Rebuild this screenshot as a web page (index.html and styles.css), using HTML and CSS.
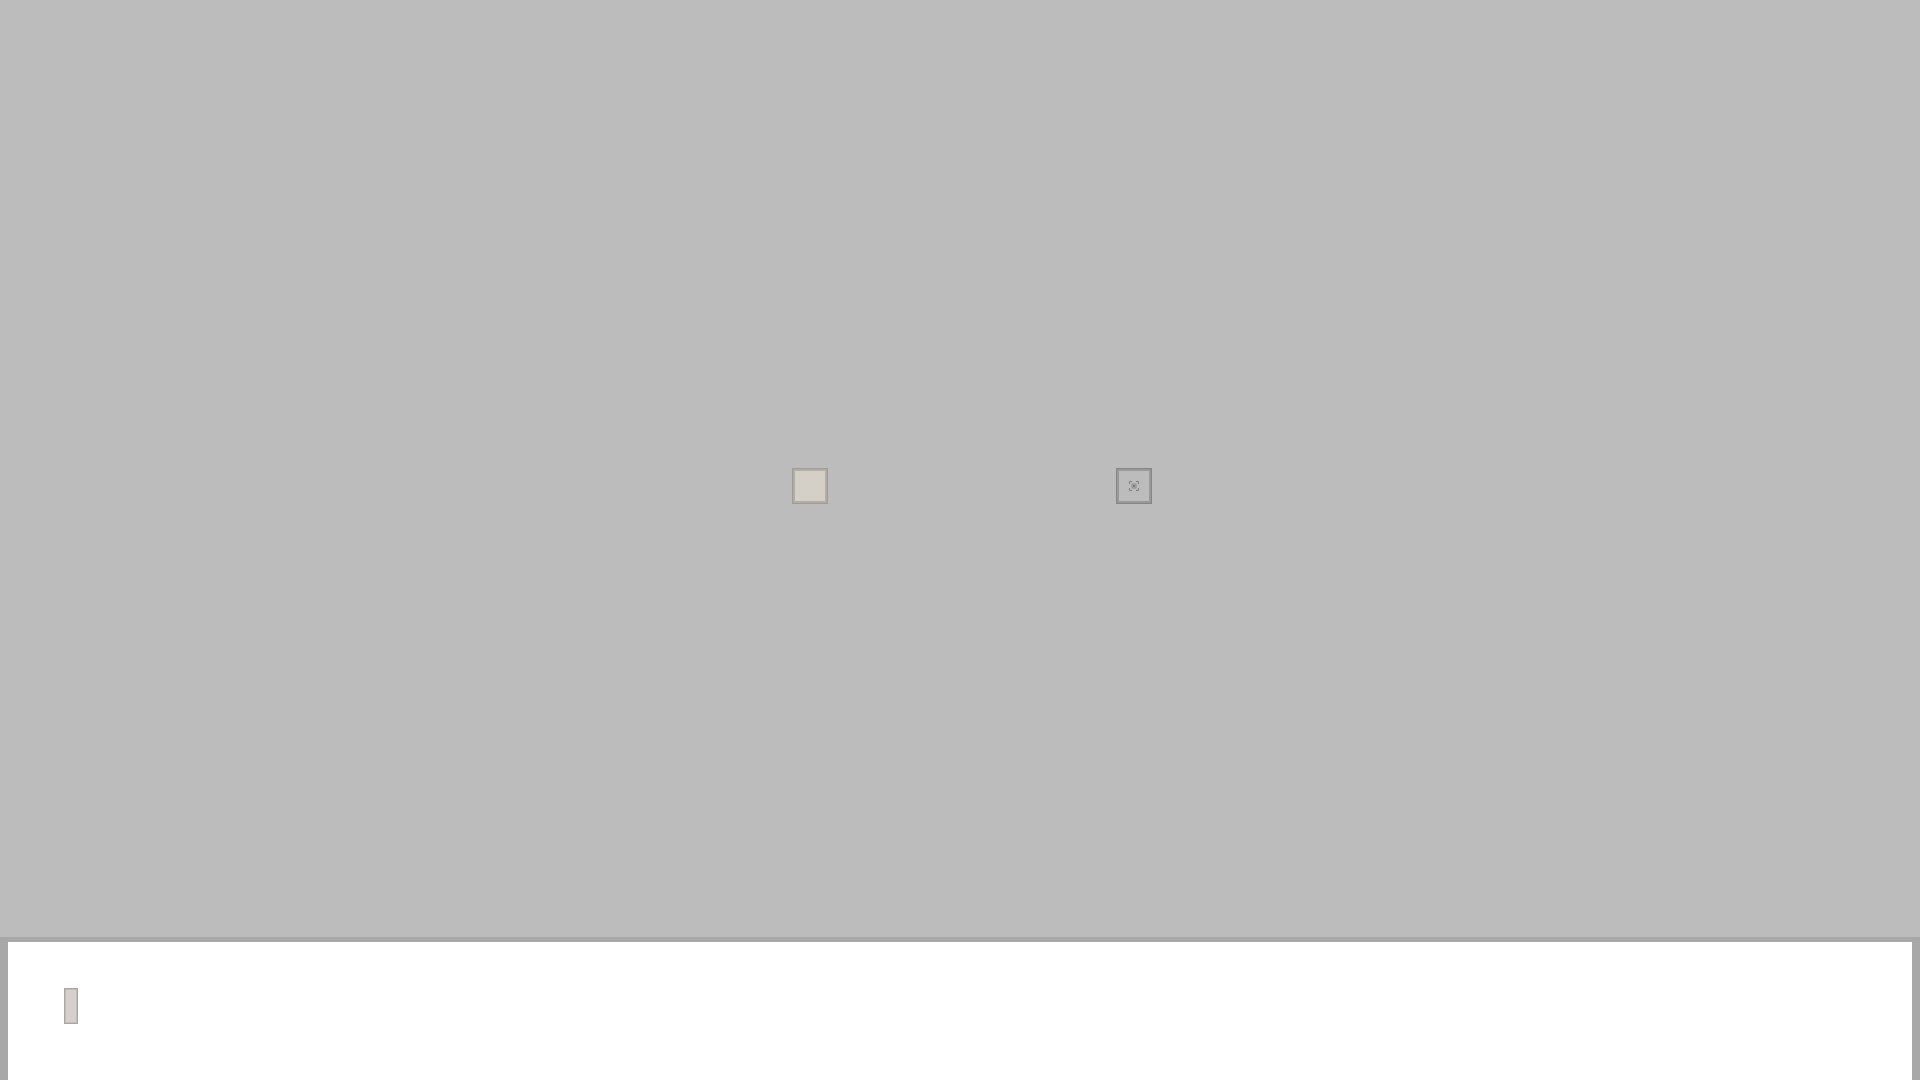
FILE: index.html
```html
<!DOCTYPE html>
<html>
<head>
<meta charset="utf-8">
<link rel="stylesheet" href="styles.css">
</head>
<body>
<div class="app">
  <div class="stage">
    <div class="tile tile-light"></div>
    <div class="tile tile-dark">
      <svg class="focus-icon" width="10" height="10" viewBox="0 0 10 10">
        <path d="M0.5 3V0.5H3M7 0.5H9.5V3M9.5 7V9.5H7M3 9.5H0.5V7" fill="none" stroke="#7c7c7c" stroke-width="1"/>
        <rect x="3" y="3" width="4" height="4" fill="none" stroke="#8a8a8a" stroke-width="1"/>
        <rect x="4" y="4" width="2" height="2" fill="#777"/>
      </svg>
    </div>
  </div>
  <div class="dock">
    <div class="dock-inner">
      <div class="thumb"></div>
    </div>
  </div>
</div>
</body>
</html>
```

FILE: styles.css
```css
html, body {
  margin: 0;
  padding: 0;
  width: 1920px;
  height: 1080px;
  overflow: hidden;
  background: #bcbcbc;
  font-family: "Liberation Sans", Arial, sans-serif;
}
.app {
  display: flex;
  flex-direction: column;
  width: 1920px;
  height: 1080px;
}
.stage {
  height: 468px;
  padding-left: 792px;
  display: flex;
  align-items: flex-end;
  flex: 0 0 auto;
  box-sizing: border-box;
}
.tile {
  width: 36px;
  height: 36px;
  box-sizing: border-box;
  flex: 0 0 auto;
  margin-bottom: -36px;
}
.tile-light {
  background: #d4d0c8;
  border: 1px solid #a09c94;
  box-shadow: inset 0 0 0 2px #b2aea6;
}
.tile-dark {
  margin-left: 288px;
  background: #bcbcbc;
  border: 1px solid #858585;
  box-shadow: inset 0 0 0 2px #999999;
  display: flex;
  align-items: center;
  justify-content: center;
}
.focus-icon {
  display: block;
}
.dock {
  margin-top: auto;
  height: 143px;
  background: #a8a8a8;
  padding: 5px 8px 0 8px;
  box-sizing: border-box;
}
.dock-inner {
  background: #ffffff;
  height: 100%;
  padding: 46px 0 0 56px;
  box-sizing: border-box;
}
.thumb {
  width: 14px;
  height: 36px;
  box-sizing: border-box;
  background: #d6d0cc;
  border: 1px solid #aca6a1;
  box-shadow: inset 0 0 0 1px #c2bcb7;
}
```
